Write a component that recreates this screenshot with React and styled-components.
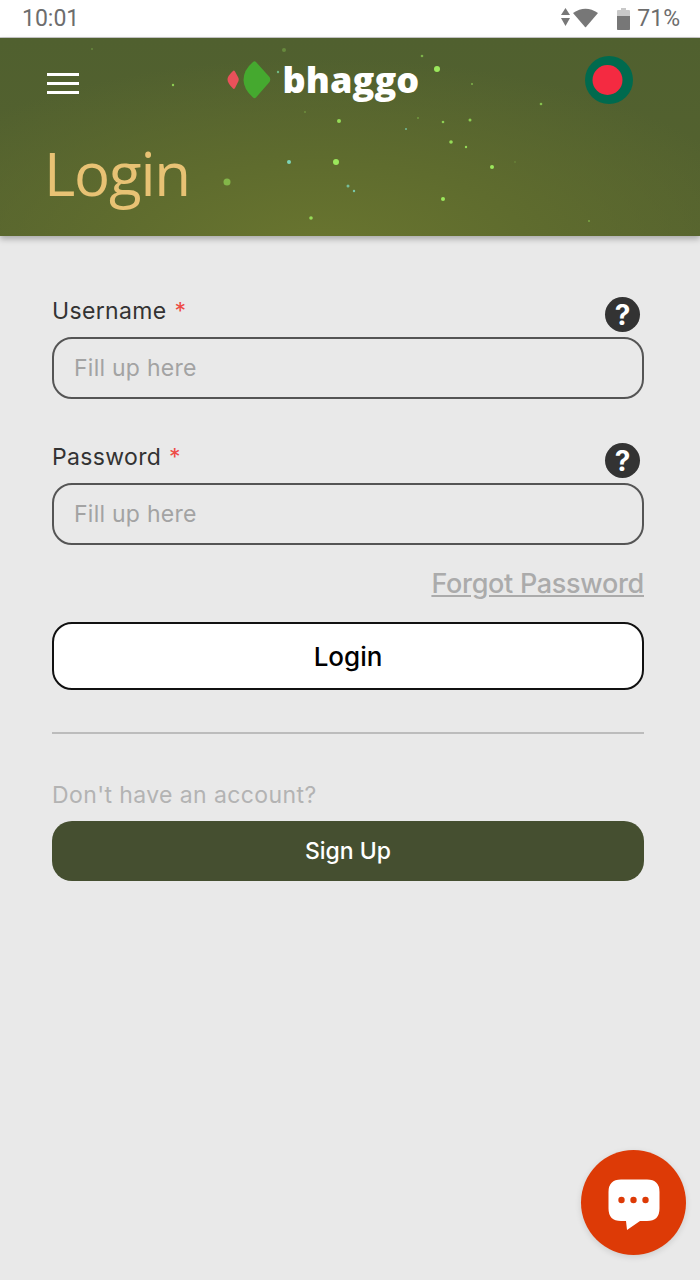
import React from 'react'
import styled, { createGlobalStyle } from 'styled-components'

const GlobalStyle = createGlobalStyle`
  html, body {
    margin: 0;
    padding: 0;
    background: #e9e9e9;
  }
  * {
    box-sizing: border-box;
  }
  body {
    font-family: Inter, 'Noto Sans', sans-serif;
  }
`

const Page = styled.div`
  width: 700px;
  height: 1280px;
  overflow: hidden;
  position: relative;
  background: #e9e9e9;
`

const StatusBar = styled.div`
  height: 38px;
  background: #fff;
  border-bottom: 1px solid #c9c9c9;
  display: flex;
  align-items: center;
  justify-content: space-between;
  padding: 0 20px 0 22px;
  color: #6d6d6d;
  font-family: Roboto, sans-serif;
  font-size: 23px;
`

const StatusIcons = styled.div`
  display: flex;
  align-items: center;
`

const Battery = styled.svg`
  margin: 0 7px 0 18px;
`

const Header = styled.header`
  height: 198px;
  position: relative;
  overflow: hidden;
  padding: 0 46px;
  background: radial-gradient(ellipse 460px 190px at 320px 210px, #69752f 0%, #5f6c2e 45%, rgba(85, 98, 47, 0) 100%),
    linear-gradient(180deg, #50602f 0%, #55622f 100%);
`

const HeaderShadow = styled.div`
  position: relative;
  z-index: 1;
  box-shadow: 0 3px 6px rgba(0, 0, 0, 0.28);
`

const Particles = styled.svg`
  position: absolute;
  inset: 0;
`

const TopRow = styled.div`
  position: relative;
  height: 84px;
  display: flex;
  align-items: center;
  justify-content: space-between;
  padding-right: 21px;
`

const Burger = styled.div`
  width: 32px;
  margin: 6px 0 0 1px;
  display: flex;
  flex-direction: column;
  gap: 6px;
  span {
    height: 3px;
    background: #fff;
  }
`

const Logo = styled.div`
  width: 193px;
  margin-right: 18px;
  display: flex;
  align-items: center;
  gap: 11px;
`

const LogoText = styled.span`
  color: #fff;
  font-family: 'Open Sans', sans-serif;
  font-weight: 800;
  font-size: 36px;
  letter-spacing: 0.1px;
  line-height: 1;
`

const Title = styled.h1`
  position: relative;
  margin: 16px 0 0 -2px;
  color: #e8c274;
  font-family: 'Open Sans', sans-serif;
  font-weight: 400;
  font-size: 60px;
  letter-spacing: -1.2px;
  line-height: 70px;
`

const Form = styled.main`
  padding: 61px 56px 0 52px;
`

const Field = styled.div`
  margin-bottom: 44px;
  &:last-of-type {
    margin-bottom: 21px;
  }
`

const FieldHead = styled.div`
  height: 40px;
  display: flex;
  justify-content: space-between;
  padding-right: 4px;
`

const Label = styled.label`
  color: #333;
  font-size: 23px;
  line-height: 28px;
  letter-spacing: 0.35px;
  span {
    color: #ee4b45;
    margin-left: 1px;
  }
`

const Help = styled.div`
  width: 35px;
  height: 35px;
  border-radius: 50%;
  background: #333;
  color: #fff;
  font-size: 28px;
  font-weight: 700;
  display: flex;
  align-items: center;
  justify-content: center;
`

const Input = styled.input`
  display: block;
  width: 100%;
  height: 62px;
  padding: 0 20px;
  border: 2px solid #555;
  border-radius: 20px;
  background: transparent;
  font-family: inherit;
  font-size: 23px;
  letter-spacing: 0.25px;
  &::placeholder {
    color: #a3a3a3;
    opacity: 1;
  }
`

const Forgot = styled.a`
  display: block;
  text-align: right;
  color: #ababab;
  font-size: 27px;
  line-height: 36px;
  font-weight: 500;
  letter-spacing: -0.3px;
  text-decoration: underline;
`

const LoginButton = styled.button`
  display: block;
  width: 100%;
  height: 68px;
  margin-top: 20px;
  border: 2px solid #111;
  border-radius: 20px;
  background: #fff;
  color: #000;
  font-family: inherit;
  font-size: 26px;
  font-weight: 500;
`

const Divider = styled.hr`
  margin: 42px 0 0;
  border: 0;
  border-top: 2px solid #bcbcbc;
`

const NoAccount = styled.p`
  margin: 47px 0 12px;
  color: #b3b3b3;
  font-size: 23px;
  line-height: 28px;
  letter-spacing: 0.4px;
`

const SignUp = styled.button`
  display: block;
  width: 100%;
  height: 60px;
  border: 0;
  border-radius: 20px;
  background: #454f30;
  color: #fff;
  font-family: inherit;
  font-size: 23px;
  font-weight: 500;
`

const ChatButton = styled.button`
  position: absolute;
  left: 581px;
  top: 1150px;
  width: 105px;
  height: 105px;
  padding: 5px 0 0;
  border: 0;
  border-radius: 50%;
  background: #dd3a06;
  display: flex;
  align-items: center;
  justify-content: center;
  box-shadow: 0 2px 6px rgba(0, 0, 0, 0.12);
`

const dots = [
  [92, 11, 1, 0.3, '#9be85c'], [173, 47, 1.2, 0.8, '#9be85c'], [278, 34, 1.2, 0.7, '#7fe0a8'], [284, 12, 2, 0.3, '#9be85c'],
  [339, 83, 2, 0.9, '#9be85c'], [289, 124, 2, 0.9, '#7fe0c8'], [336, 124, 3, 1, '#9be85c'], [227, 144, 3.5, 0.6, '#9be85c'],
  [348, 148, 1.5, 0.7, '#7fe0c8'], [354, 153, 1.2, 0.8, '#7fe0c8'], [311, 180, 1.8, 0.9, '#9be85c'], [422, 18, 1.3, 0.6, '#9be85c'],
  [437, 31, 3, 1, '#9be85c'], [472, 46, 1, 0.6, '#9be85c'], [541, 66, 1.3, 0.7, '#9be85c'], [418, 80, 1, 0.4, '#9be85c'],
  [406, 91, 1, 0.7, '#7fe0c8'], [443, 84, 1.3, 0.8, '#9be85c'], [470, 82, 1.5, 0.8, '#9be85c'], [451, 104, 1.8, 0.9, '#9be85c'],
  [466, 109, 1.2, 0.9, '#9be85c'], [492, 129, 2, 1, '#9be85c'], [443, 161, 2, 1, '#9be85c'], [589, 183, 1, 0.5, '#9be85c'],
  [305, 74, 1, 0.3, '#9be85c'], [515, 124, 0.7, 0.4, '#9be85c']
]

const HelpBadge = () => <Help>?</Help>

export default function App() {
  return (
    <Page>
      <GlobalStyle />
      <StatusBar>
        <span>10:01</span>
        <StatusIcons>
          <svg width="38" height="22" viewBox="0 0 38 22">
            <path d="M4.500 0 L9 7 H0 Z M4.500 18 L9 10 H0 Z" fill="#777" />
            <path d="M12 5 Q24.500 -3.500 37 5 L25 19 Q24.500 19.500 24 19 Z" fill="#777" />
          </svg>
          <Battery width="13" height="22" viewBox="0 0 13 22">
            <path d="M4 0 H9 V2 H12 Q13 2 13 3 V21 Q13 22 12 22 H1 Q0 22 0 21 V3 Q0 2 1 2 H4 Z" fill="#c8c8c8" />
            <path d="M0 8 H13 V21 Q13 22 12 22 H1 Q0 22 0 21 Z" fill="#777" />
          </Battery>
          <span>71%</span>
        </StatusIcons>
      </StatusBar>

      <HeaderShadow>
        <Header>
          <Particles width="700" height="198">
            {dots.map(([x, y, r, o, c], i) => (
              <circle key={i} cx={x} cy={y} r={r} fill={c} opacity={o} />
            ))}
          </Particles>
          <TopRow>
            <Burger>
              <span />
              <span />
              <span />
            </Burger>
            <Logo>
              <svg width="45" height="38" viewBox="0 0 45 38">
                <path d="M6 10 Q7 9 8 10.500 L11.500 17 Q12 18.500 11.500 20 L8 27 Q7 28.500 6 27.500 Q0.500 22 0.500 18.500 Q0.500 15 6 10 Z" fill="#e9515a" />
                <path d="M26 1 Q27.500 -0.500 29 1 L42.500 16 Q44 18.500 42.500 21 L29 36.500 Q27.500 38 26 36.500 Q16.500 28 16.500 19 Q16.500 9 26 1 Z" fill="#45a92f" />
              </svg>
              <LogoText>bhaggo</LogoText>
            </Logo>
            <svg width="48" height="48" viewBox="0 0 48 48">
              <circle cx="24" cy="24" r="24" fill="#006a4e" />
              <circle cx="22.500" cy="24" r="15" fill="#f42a41" />
            </svg>
          </TopRow>
          <Title>Login</Title>
        </Header>
      </HeaderShadow>

      <Form>
        <Field>
          <FieldHead>
            <Label>Username <span>*</span></Label>
            <HelpBadge />
          </FieldHead>
          <Input placeholder="Fill up here" />
        </Field>
        <Field>
          <FieldHead>
            <Label>Password <span>*</span></Label>
            <HelpBadge />
          </FieldHead>
          <Input placeholder="Fill up here" />
        </Field>
        <Forgot>Forgot Password</Forgot>
        <LoginButton>Login</LoginButton>
        <Divider />
        <NoAccount>Don't have an account?</NoAccount>
        <SignUp>Sign Up</SignUp>
      </Form>

      <ChatButton>
        <svg width="52" height="52" viewBox="0 0 52 52">
          <path d="M13 0.500 H39 Q51.500 0.500 51.500 13 V29.500 Q51.500 42 39 42 H32 L19 51 L18 42 H13 Q0.500 42 0.500 29.500 V13 Q0.500 0.500 13 0.500 Z" fill="#fff" />
          <circle cx="13.500" cy="21" r="3.200" fill="#dd3a06" />
          <circle cx="25.500" cy="21" r="3.200" fill="#dd3a06" />
          <circle cx="37.500" cy="21" r="3.200" fill="#dd3a06" />
        </svg>
      </ChatButton>
    </Page>
  )
}
